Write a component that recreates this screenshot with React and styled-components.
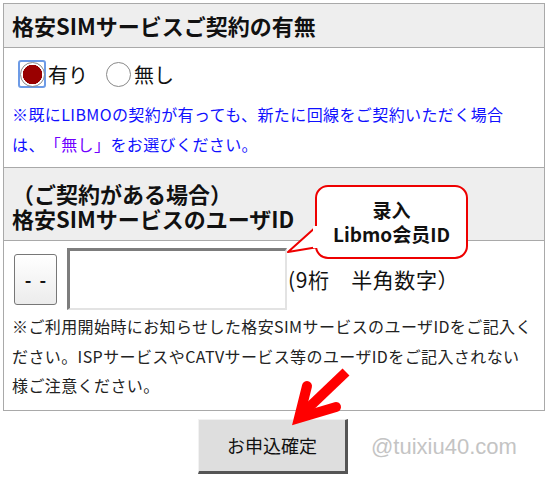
import React from 'react'
import styled, { createGlobalStyle, css } from 'styled-components'

const Global = createGlobalStyle`
  body {
    margin: 0;
    background: #fff;
    font-family: "Noto Sans CJK JP", "Noto Sans", sans-serif;
    text-spacing-trim: space-all;
  }
`

const Page = styled.div`
  position: relative;
  width: 550px;
  height: 482px;
  overflow: hidden;
`

const Table = styled.div`
  margin: 3px 0 0 3px;
  width: 542px;
  box-sizing: border-box;
  border: 1px solid #a9a9a9;
`

const HeadCell = styled.div`
  background: #eeeeee;
  border-bottom: 1px solid #a9a9a9;
  border-top: ${p => (p.$top ? 'none' : '1px solid #a9a9a9')};
  padding: ${p => p.$pad || '0 8px'};
  font-weight: bold;
  font-size: 22px;
  line-height: ${p => p.$lh || '43px'};
  color: #111;
  text-shadow: 0 0 1px #fff;
`

const BodyCell = styled.div`
  padding: ${p => p.$pad};
  color: #222;
`

const RadioRow = styled.div`
  display: flex;
  align-items: center;
  height: 28px;
  margin-left: 6px;
  font-size: 20px;
  color: #111;
`

const RadioItem = styled.label`
  display: flex;
  align-items: center;
  margin-right: 16px;
`

const FocusBox = styled.span`
  width: 28px;
  height: 28px;
  box-sizing: border-box;
  display: flex;
  align-items: center;
  justify-content: center;
  border-radius: 3px;
  border: 2px solid ${p => (p.$focus ? '#6d9be6' : 'transparent')};
  margin-right: 2px;
`

const RadioMark = styled.span`
  width: 25px;
  height: 25px;
  flex: none;
  box-sizing: border-box;
  border-radius: 50%;
  border: 1px solid #8a8a8a;
  background: #fff;
  ${p =>
    p.$checked &&
    css`
      background: radial-gradient(circle, #990000 0 9.5px, #fff 10px);
    `}
`

const Note = styled.p`
  margin: ${p => p.$m || '0'};
  font-size: 16px;
  letter-spacing: 0.4px;
  line-height: ${p => p.$lh || '30px'};
  color: ${p => p.$color || '#222'};
  white-space: nowrap;
`

const Pick = styled.span`
  color: #7000ff;
`

const InputRow = styled.div`
  display: flex;
  align-items: center;
  height: 62px;
  margin-left: 2px;
`

const DashButton = styled.button`
  width: 43px;
  height: 51px;
  box-sizing: border-box;
  border: 1px solid #777;
  border-radius: 3px;
  background: linear-gradient(#ffffff, #ececec);
  font-family: "Noto Sans CJK JP", sans-serif;
  font-size: 18px;
  font-weight: bold;
  letter-spacing: 2px;
  padding: 0 0 0 2px;
  color: #111;
  margin-right: 10px;
`

const IdInput = styled.input`
  width: 220px;
  height: 62px;
  box-sizing: border-box;
  border-style: solid;
  border-width: 3px 2px 2px 3px;
  border-color: #7d7d7d #e3e3e3 #e3e3e3 #7d7d7d;
  background: #fff;
  padding: 0 6px;
  font-size: 20px;
  outline: none;
`

const Hint = styled.span`
  font-size: 21px;
  letter-spacing: 0.6px;
  color: #111;
  margin-left: 1px;
`

const Actions = styled.div`
  display: flex;
  justify-content: center;
  padding: 8px 4px 0 0;
`

const Submit = styled.button`
  width: 150px;
  height: 55px;
  box-sizing: border-box;
  background: #dedede;
  border-style: solid;
  border-width: 1px 3px 3px 1px;
  border-color: #f2f2f2 #555 #555 #f2f2f2;
  font-family: "Noto Sans CJK JP", sans-serif;
  font-size: 18px;
  color: #111;
`

const Bubble = styled.div`
  position: absolute;
  left: 315px;
  top: 185px;
  width: 153px;
  height: 74px;
  box-sizing: border-box;
  border: 2px solid #ee0000;
  border-radius: 13px;
  background: #fff;
  display: flex;
  flex-direction: column;
  align-items: center;
  justify-content: center;
  font-family: "Noto Sans CJK SC", sans-serif;
  font-weight: bold;
  font-size: 19px;
  line-height: 24px;
  color: #111;
`

const Overlay = styled.svg`
  position: absolute;
  left: 0;
  top: 0;
  pointer-events: none;
`

const Watermark = styled.span`
  position: absolute;
  left: 371px;
  top: 433px;
  font-family: "Liberation Sans", Arial, sans-serif;
  font-size: 22px;
  line-height: 28px;
  color: #c4c4c4;
`

export default function App () {
  return (
    <Page>
      <Global />
      <Table>
        <HeadCell $top>格安SIMサービスご契約の有無</HeadCell>
        <BodyCell $pad='12px 8px 8px'>
          <RadioRow>
            <RadioItem>
              <FocusBox $focus><RadioMark $checked /></FocusBox>有り
            </RadioItem>
            <RadioItem>
              <FocusBox><RadioMark /></FocusBox>無し
            </RadioItem>
          </RadioRow>
          <Note $m='11px 0 0' $color='#1010ff'>
            ※既にLIBMOの契約が有っても、新たに回線をご契約いただく場合<br />
            は、<Pick>「無し」</Pick>をお選びください。
          </Note>
        </BodyCell>
        <HeadCell $pad='13px 8px 9px' $lh='25px'>
          （ご契約がある場合）<br />格安SIMサービスのユーザID
        </HeadCell>
        <BodyCell $pad='7px 8px 9px'>
          <InputRow>
            <DashButton>- -</DashButton>
            <IdInput />
            <Hint>(9桁　半角数字）</Hint>
          </InputRow>
          <Note $m='2px 0 0' $lh='29.5px'>
            ※ご利用開始時にお知らせした格安SIMサービスのユーザIDをご記入く<br />
            ださい。ISPサービスやCATVサービス等のユーザIDをご記入されない<br />
            様ご注意ください。
          </Note>
        </BodyCell>
      </Table>
      <Actions>
        <Submit>お申込確定</Submit>
      </Actions>

      <Overlay width='550' height='482'>
        <path d='M288 252 L317 226 L318 247 Z' fill='#fff' stroke='#ee0000' strokeWidth='2' strokeLinejoin='round' />
      </Overlay>
      <Bubble>
        <span>录入</span>
        <span>Libmo会员ID</span>
      </Bubble>
      <Overlay width='550' height='482'>
        <rect x='313' y='226' width='6' height='22' fill='#fff' />
        <g stroke='#ff0000' strokeWidth='10' fill='none'>
          <line x1='346' y1='372' x2='303' y2='413' strokeLinecap='butt' />
          <polyline points='307,386 299,418 336,407' strokeLinejoin='miter' strokeLinecap='round' />
        </g>
      </Overlay>
      <Watermark>@tuixiu40.com</Watermark>
    </Page>
  )
}
